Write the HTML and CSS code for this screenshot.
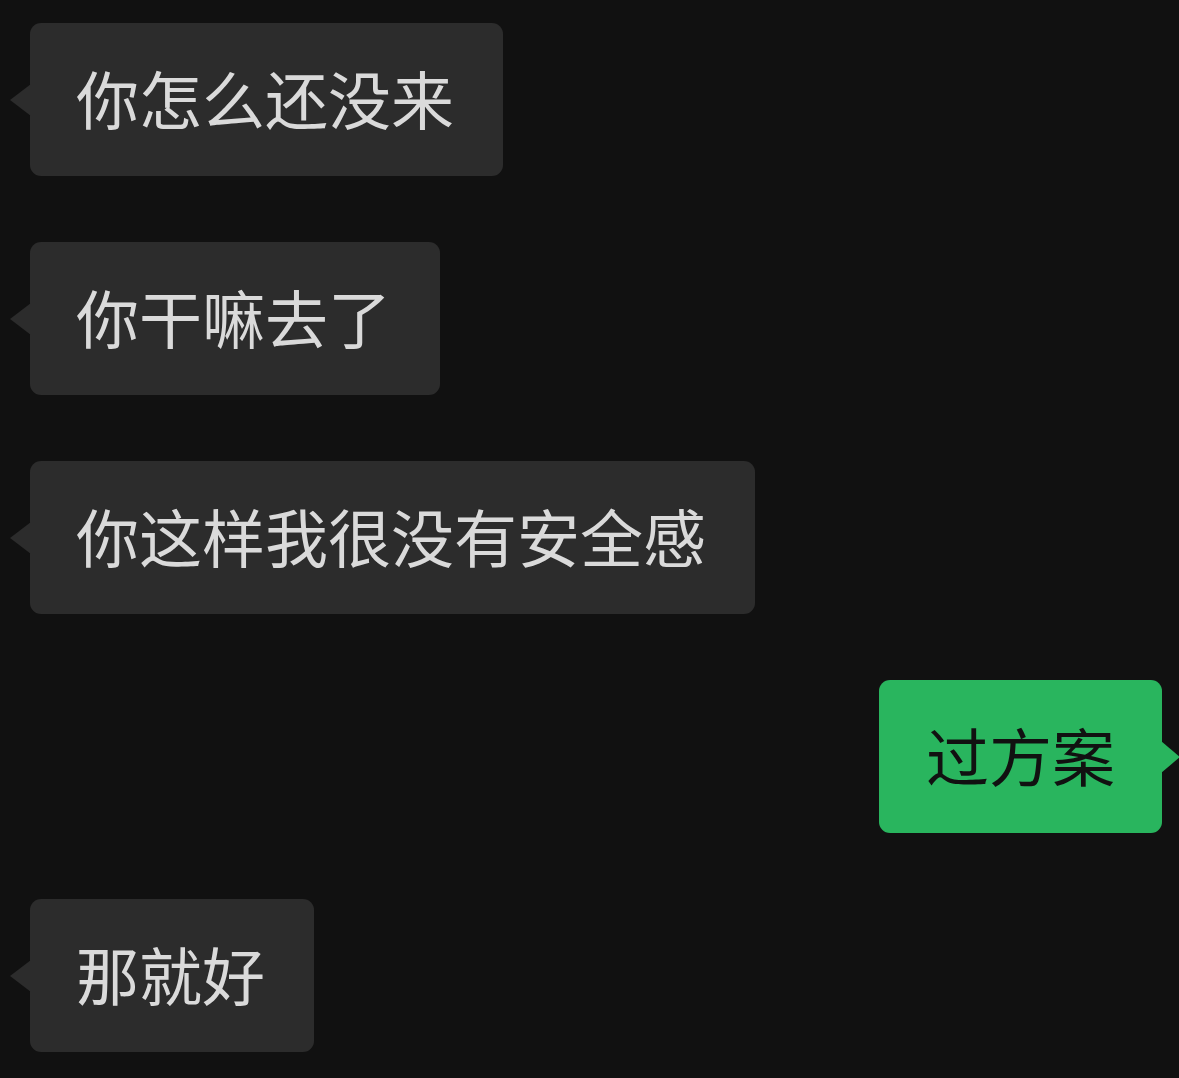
FILE: index.html
```html
<!DOCTYPE html>
<html lang="zh-CN">
<head>
  <meta charset="UTF-8" />
  <meta name="viewport" content="width=device-width, initial-scale=1.0" />
  <title>聊天记录</title>
  <link rel="stylesheet" href="styles.css">
</head>
<body>
  <div class="chat">
    <div class="msg left"><div class="bubble">你怎么还没来</div></div>
    <div class="msg left"><div class="bubble">你干嘛去了</div></div>
    <div class="msg left"><div class="bubble">你这样我很没有安全感</div></div>
    <div class="msg right"><div class="bubble">过方案</div></div>
    <div class="msg left"><div class="bubble">那就好</div></div>
  </div>
</body>
</html>
```

FILE: styles.css
```css
* { margin: 0; padding: 0; box-sizing: border-box; }
html, body { background: #111111; }
body { font-family: "Noto Sans CJK SC", "Noto Sans", sans-serif; height: 1078px; overflow: hidden; }

.chat { display: flex; flex-direction: column; gap: 66px; padding: 23px 17px 0 30px; }
.msg { display: flex; }
.msg.left { justify-content: flex-start; }
.msg.right { justify-content: flex-end; }

.bubble {
  position: relative; height: 153px; line-height: 147px; padding: 0 49px 6px 46px;
  font-size: 63px; border-radius: 11px;
  background: #2c2c2c; color: #dadada; white-space: nowrap;
}
.bubble::before {
  content: ""; position: absolute; top: 61px; width: 21px; height: 32px;
  background: inherit;
}
.left .bubble::before { left: -20px; clip-path: polygon(0 50%, 100% 0, 100% 100%); }

.right .bubble { background: #29b55e; color: #111111; padding: 0 47px 6px; }
.right .bubble::before { right: -18px; width: 19px; clip-path: polygon(100% 50%, 0 0, 0 100%); }
```
